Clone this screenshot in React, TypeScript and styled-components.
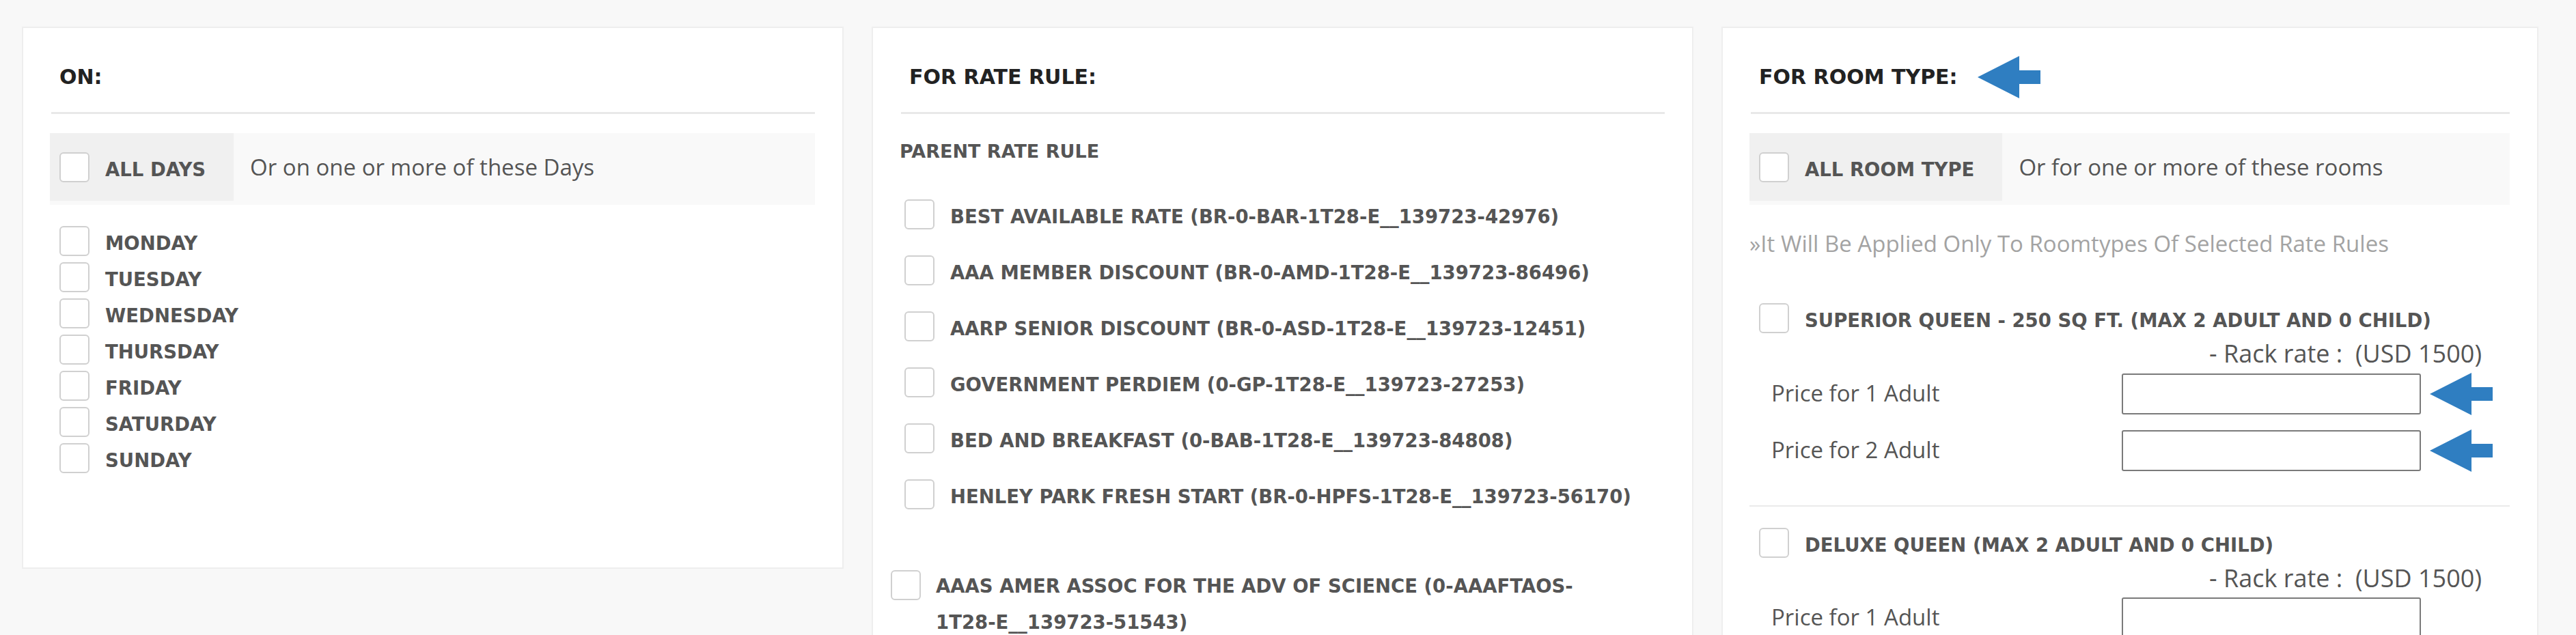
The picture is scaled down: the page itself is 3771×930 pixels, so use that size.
import styled, { createGlobalStyle } from "styled-components"

const GlobalStyle = createGlobalStyle`
    html, body {
        margin: 0;
        padding: 0;
        background: #f8f8f8;
        overflow: hidden;
    }
    * {
        box-sizing: border-box;
    }
`

const DAYS = ['MONDAY', 'TUESDAY', 'WEDNESDAY', 'THURSDAY', 'FRIDAY', 'SATURDAY', 'SUNDAY']

const PARENT_RULES = [
    'BEST AVAILABLE RATE (BR-0-BAR-1T28-E__139723-42976)',
    'AAA MEMBER DISCOUNT (BR-0-AMD-1T28-E__139723-86496)',
    'AARP SENIOR DISCOUNT (BR-0-ASD-1T28-E__139723-12451)',
    'GOVERNMENT PERDIEM (0-GP-1T28-E__139723-27253)',
    'BED AND BREAKFAST (0-BAB-1T28-E__139723-84808)',
    'HENLEY PARK FRESH START (BR-0-HPFS-1T28-E__139723-56170)',
]

type RoomType = {
    id: string
    name: string
    rack: string
    adults: number[]
    marked: boolean
}

const ROOMS: RoomType[] = [
    { id: 'sq', name: 'SUPERIOR QUEEN - 250 SQ FT. (MAX 2 ADULT AND 0 CHILD)', rack: 'USD 1500', adults: [1, 2], marked: true },
    { id: 'dq', name: 'DELUXE QUEEN (MAX 2 ADULT AND 0 CHILD)', rack: 'USD 1500', adults: [1, 2], marked: false },
]

const PointerArrow = () => <ArrowSvg viewBox="0 0 92 62">
    <polygon points="0,31 61,0 61,21 92,21 92,41 61,41 61,62" fill="#2f7ec1" />
</ArrowSvg>

const App = () => {
    return <>
        <GlobalStyle />
        <Page>
            <Panel bottomSpace={138}>
                <PanelHeader>
                    <PanelTitle>ON:</PanelTitle>
                </PanelHeader>
                <Divider />
                <AllBar>
                    <AllLabel>
                        <Check type="checkbox" />
                        <BoldLabel>ALL DAYS</BoldLabel>
                    </AllLabel>
                    <AllHint>Or on one or more of these Days</AllHint>
                </AllBar>
                <DayList>
                    {DAYS.map(_ => <CheckRow key={_}>
                        <Check type="checkbox" />
                        <BoldLabel>{_}</BoldLabel>
                    </CheckRow>)}
                </DayList>
            </Panel>

            <Panel bottomSpace={120}>
                <PanelHeader>
                    <PanelTitle>FOR RATE RULE:</PanelTitle>
                </PanelHeader>
                <Divider />
                <GroupTitle>PARENT RATE RULE</GroupTitle>
                <RuleList>
                    {PARENT_RULES.map(_ => <RuleRow key={_}>
                        <Check type="checkbox" />
                        <BoldLabel>{_}</BoldLabel>
                    </RuleRow>)}
                </RuleList>
                <ChildRule>
                    <Check type="checkbox" />
                    <WrapLabel>
                        AAAS AMER ASSOC FOR THE ADV OF SCIENCE (0-AAAFTAOS-<br />1T28-E__139723-51543)
                    </WrapLabel>
                </ChildRule>
            </Panel>

            <Panel bottomSpace={120}>
                <PanelHeader>
                    <PanelTitle>FOR ROOM TYPE:</PanelTitle>
                    <PointerArrow />
                </PanelHeader>
                <Divider />
                <AllBar>
                    <AllLabel>
                        <Check type="checkbox" />
                        <BoldLabel>ALL ROOM TYPE</BoldLabel>
                    </AllLabel>
                    <AllHint>Or for one or more of these rooms</AllHint>
                </AllBar>
                <Note>»It Will Be Applied Only To Roomtypes Of Selected Rate Rules</Note>
                <RoomList>
                    {ROOMS.map((room, i) => <RoomBlock key={room.id} first={i === 0}>
                        <CheckRow>
                            <Check type="checkbox" />
                            <BoldLabel>{room.name}</BoldLabel>
                        </CheckRow>
                        <RackRate>- Rack rate :&nbsp; ({room.rack})</RackRate>
                        <PriceGrid>
                            {room.adults.map(n => <PriceRow key={n}>
                                <PriceLabel>Price for {n} Adult</PriceLabel>
                                <PriceInput type="text" />
                                {room.marked ? <PointerArrow /> : <span />}
                            </PriceRow>)}
                        </PriceGrid>
                    </RoomBlock>)}
                </RoomList>
            </Panel>
        </Page>
    </>
}

export default App

const Page = styled.div`
    display: grid;
    grid-template-columns: 1203px 1203px 1196px;
    column-gap: 41px;
    align-items: start;
    height: 930px;
    overflow: hidden;
    padding: 39px 0 0 32px;
`

const Panel = styled.div<{ bottomSpace: number }>`
    background: #ffffff;
    border: 2px solid #eeeeee;
    padding: 0 40px ${({ bottomSpace }) => bottomSpace}px 39px;
`

const PanelHeader = styled.div`
    display: flex;
    align-items: center;
    gap: 29px;
    height: 40px;
    margin: 52px 0 31px;
    padding-left: 14px;
`

const PanelTitle = styled.div`
    font-family: "DejaVu Sans", "Liberation Sans", sans-serif;
    font-weight: 700;
    font-size: 30px;
    line-height: 40px;
    color: #222222;
`

const ArrowSvg = styled.svg`
    width: 92px;
    height: 62px;
    flex: 0 0 92px;
    display: block;
`

const Divider = styled.div`
    height: 3px;
    margin-left: 2px;
    background: #e8e8e8;
`

const AllBar = styled.div`
    display: flex;
    align-items: flex-start;
    margin-top: 28px;
    padding-bottom: 6px;
    background: #f9f9f9;
`

const AllLabel = styled.div`
    display: flex;
    align-items: center;
    gap: 23px;
    height: 99px;
    padding: 0 41px 0 14px;
    background: #f0f0f0;
`

const AllHint = styled.div`
    align-self: center;
    margin: 0 0 0 24px;
    font-family: "Open Sans", "Liberation Sans", sans-serif;
    font-size: 33px;
    color: #555555;
    white-space: nowrap;
`

const Check = styled.input`
    appearance: none;
    -webkit-appearance: none;
    flex: 0 0 44px;
    width: 44px;
    height: 44px;
    margin: 0;
    border: 2px solid #d0d0d0;
    border-radius: 6px;
    background: #ffffff;
`

const BoldLabel = styled.span`
    margin-top: 6px;
    font-family: "DejaVu Sans", "Liberation Sans", sans-serif;
    font-weight: 700;
    font-size: 27.5px;
    line-height: 34px;
    color: #555555;
    white-space: nowrap;
`

const DayList = styled.div`
    display: flex;
    flex-direction: column;
    gap: 9px;
    margin-top: 31px;
`

const CheckRow = styled.label`
    display: flex;
    align-items: center;
    gap: 23px;
    padding-left: 14px;
    height: 44px;
`

const GroupTitle = styled.div`
    margin-top: 38px;
    font-family: "DejaVu Sans", "Liberation Sans", sans-serif;
    font-weight: 700;
    font-size: 27px;
    line-height: 34px;
    color: #555555;
`

const RuleList = styled.div`
    display: flex;
    flex-direction: column;
    gap: 38px;
    margin-top: 53px;
`

const RuleRow = styled.label`
    display: flex;
    align-items: center;
    gap: 23px;
    padding-left: 7px;
    height: 44px;
`

const ChildRule = styled.label`
    display: flex;
    align-items: flex-start;
    gap: 22px;
    margin: 89px 0 0 -13px;
`

const WrapLabel = styled(BoldLabel)`
    line-height: 53px;
    margin-top: -3px;
    white-space: normal;
`

const Note = styled.div`
    margin-top: 34px;
    font-family: "Open Sans", "Liberation Sans", sans-serif;
    font-size: 33px;
    line-height: 45px;
    color: #a3a3a3;
`

const RoomList = styled.div`
    display: flex;
    flex-direction: column;
`

const RoomBlock = styled.div<{ first: boolean }>`
    ${({ first }) => first
        ? 'margin-top: 65px; padding-bottom: 51px;'
        : 'padding: 31px 0 51px; border-top: 2px solid #eaeaea;'}
`

const RackRate = styled.div`
    margin-top: 7px;
    padding-right: 41px;
    text-align: right;
    font-family: "Open Sans", "Liberation Sans", sans-serif;
    font-size: 36px;
    line-height: 45px;
    color: #555555;
`

const PriceGrid = styled.div`
    display: flex;
    flex-direction: column;
    gap: 23px;
    margin-top: 6px;
`

const PriceRow = styled.div`
    display: grid;
    grid-template-columns: 500px 438px 92px;
    column-gap: 13px;
    align-items: center;
    padding-left: 32px;
    height: 60px;
`

const PriceLabel = styled.span`
    margin-top: -3px;
    font-family: "Open Sans", "Liberation Sans", sans-serif;
    font-size: 33px;
    color: #555555;
`

const PriceInput = styled.input`
    width: 438px;
    height: 60px;
    margin: 0;
    border: 2px solid #7a7a7a;
    border-radius: 3px;
    background: #ffffff;
    font-family: "Open Sans", sans-serif;
    font-size: 30px;
`
